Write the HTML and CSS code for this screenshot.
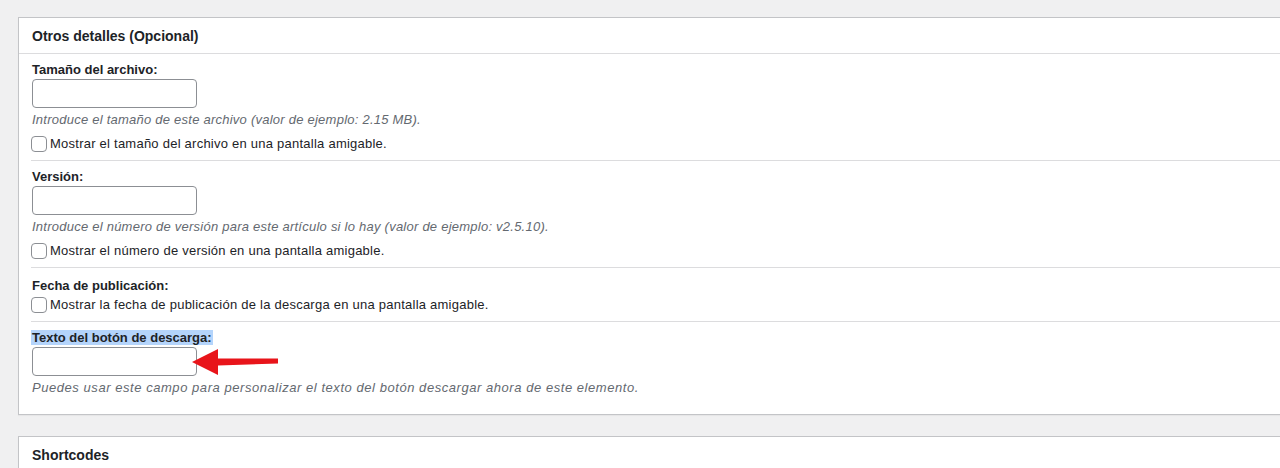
FILE: index.html
```html
<!DOCTYPE html>
<html lang="es">
<head>
<meta charset="utf-8">
<title>Otros detalles</title>
<link rel="stylesheet" href="styles.css">
</head>
<body>
<div class="wrap">
  <section class="postbox">
    <h2 class="hndle">Otros detalles (Opcional)</h2>
    <div class="inside">
      <div class="row">
        <label class="lbl">Tamaño del archivo:</label>
        <input class="txt" type="text">
        <p class="desc">Introduce el tamaño de este archivo (valor de ejemplo: 2.15 MB).</p>
        <label class="chk"><span class="box"></span>Mostrar el tamaño del archivo en una pantalla amigable.</label>
      </div>
      <div class="row">
        <label class="lbl">Versión:</label>
        <input class="txt" type="text">
        <p class="desc">Introduce el número de versión para este artículo si lo hay (valor de ejemplo: v2.5.10).</p>
        <label class="chk"><span class="box"></span>Mostrar el número de versión en una pantalla amigable.</label>
      </div>
      <div class="row row-date">
        <label class="lbl">Fecha de publicación:</label>
        <label class="chk"><span class="box"></span>Mostrar la fecha de publicación de la descarga en una pantalla amigable.</label>
      </div>
      <div class="row row-last">
        <label class="lbl"><span class="sel">Texto del botón de descarga:</span></label>
        <div class="field">
          <input class="txt" type="text">
          <svg class="arrow" width="90" height="30" viewBox="0 0 90 30" aria-hidden="true">
            <polygon points="0,15 26,2 26,11.5 86,11.5 86,16.5 26,18.5 26,28" fill="#e8141a"/>
          </svg>
        </div>
        <p class="desc desc-wide">Puedes usar este campo para personalizar el texto del botón descargar ahora de este elemento.</p>
      </div>
    </div>
  </section>
  <section class="postbox">
    <h2 class="hndle">Shortcodes</h2>
  </section>
</div>
</body>
</html>
```

FILE: styles.css
```css
html, body {
  margin: 0;
  padding: 0;
  background: #f0f0f1;
  overflow: hidden;
  height: 468px;
}
body {
  font-family: "Liberation Sans", Arial, sans-serif;
  font-size: 13px;
  color: #1d2327;
}
.wrap {
  padding: 17px 0 0 18px;
  display: flex;
  flex-direction: column;
  gap: 21px;
}
.postbox {
  width: 1300px;
  background: #fff;
  border: 1px solid #c3c4c7;
  box-shadow: 0 1px 1px rgba(0,0,0,0.04);
}
.hndle {
  margin: 0;
  font-size: 14px;
  font-weight: 700;
  line-height: 18px;
  padding: 9px 13px 8px;
  border-bottom: 1px solid #dcdcde;
  color: #1d2327;
}
.inside {
  padding: 0 0 0 12px;
}
.row {
  padding: 7px 0 7px 1px;
  border-bottom: 1px solid #dcdcde;
  display: flex;
  flex-direction: column;
  align-items: flex-start;
}
.row-date { padding-top: 9px; }
.row-last {
  border-bottom: none;
  padding-bottom: 17px;
}
.lbl {
  display: block;
  font-weight: 700;
  line-height: 18px;
}
.sel {
  background: #b4d4fb;
  padding: 0 1px;
  margin-left: -1px;
}
.txt {
  width: 165px;
  height: 29px;
  box-sizing: border-box;
  margin: 0;
  border: 1px solid #8c8f94;
  border-radius: 4px;
  background: #fff;
  padding: 0 8px;
  font: inherit;
  display: block;
}
.field {
  position: relative;
}
.arrow {
  position: absolute;
  left: 160px;
  top: 0;
}
.desc {
  margin: 3px 0 0;
  font-style: italic;
  color: #646970;
  line-height: 18px;
  letter-spacing: 0.24px;
}
.desc-wide {
  letter-spacing: 0.55px;
}
.chk {
  display: flex;
  align-items: center;
  line-height: 18px;
  margin-top: 6px;
  letter-spacing: 0.24px;
}
.row-date .chk { margin-top: 1px; }
.box {
  width: 16px;
  height: 16px;
  box-sizing: border-box;
  border: 1px solid #8c8f94;
  border-radius: 4px;
  margin: -1px 3px 0 -1px;
  background: #fff;
  flex: none;
}
```
